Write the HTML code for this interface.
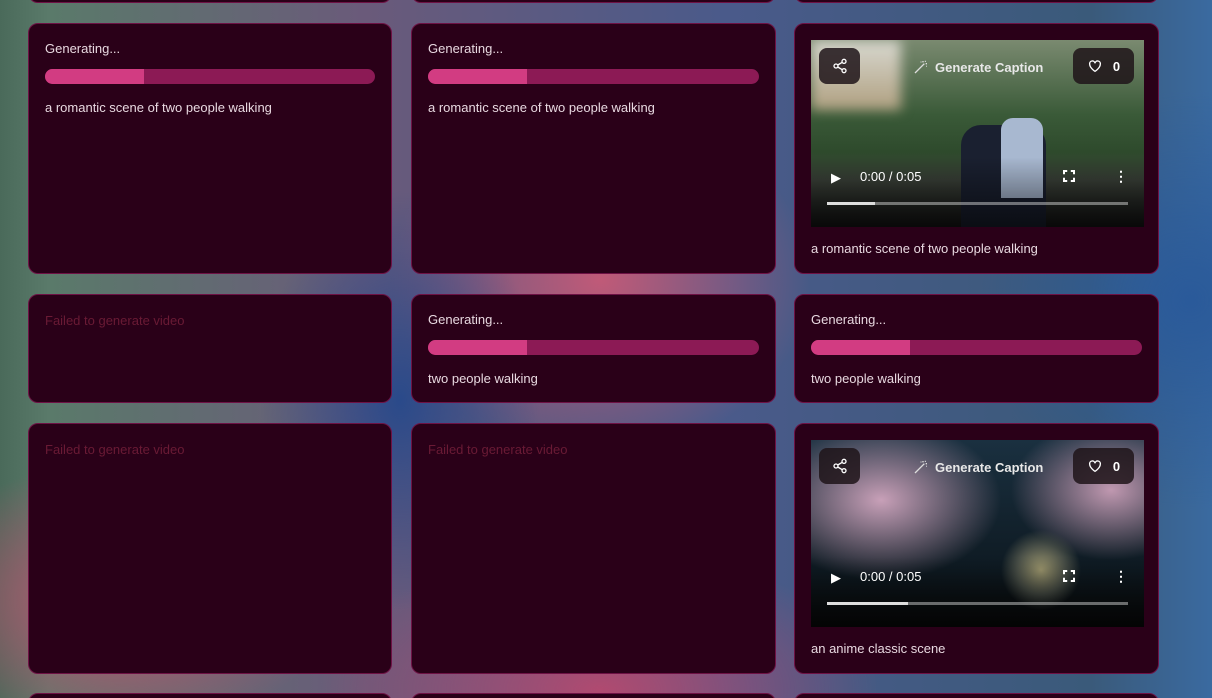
<!DOCTYPE html>
<html><head><meta charset="utf-8"><style>
*{box-sizing:border-box;margin:0;padding:0}
html,body{width:1212px;height:698px;overflow:hidden}
body{position:relative;font-family:"Liberation Sans",sans-serif;
background:
radial-gradient(ellipse 300px 200px at 120px 600px,#c05070 0%,transparent 70%),
radial-gradient(ellipse 400px 200px at 600px 690px,#b04a70 0%,transparent 70%),
radial-gradient(ellipse 300px 300px at 1190px 300px,#2a5a9a 0%,transparent 70%),
radial-gradient(ellipse 200px 300px at 400px 400px,#2a4a8a 0%,transparent 70%),
radial-gradient(ellipse 300px 250px at 600px 280px,#c05a78 0%,transparent 70%),
linear-gradient(90deg,#4a6a5a 0%,#5a7a6a 4%,#6a5a7a 30%,#4a5a8a 60%,#3a5a7a 90%,#3a6aa0 100%);}
.card{position:absolute;background:#2a0018;border:1px solid #6e1245;border-radius:10px;}
.gen{position:absolute;left:16px;top:17px;color:#e8d8e0;font-size:13px}
.bar{position:absolute;left:16px;top:45px;right:16px;height:15px;border-radius:8px;background:#8c1a55;overflow:hidden}
.bar i{display:block;width:30%;height:100%;background:#d23c82}
.cap{position:absolute;left:16px;color:#e8d8e0;font-size:13px}
.fail{position:absolute;left:16px;top:18px;color:#6a1a35;font-size:13px}
.vid{position:absolute;left:16px;top:16px;width:333px;height:187px;overflow:hidden}
.btn{position:absolute;top:8px;height:36px;background:rgba(30,20,25,.85);border-radius:8px;color:#fff;font-size:13px;font-weight:bold;display:flex;align-items:center;justify-content:center;gap:10px}
.ctrl{position:absolute;left:0;right:0;bottom:0;height:70px;background:linear-gradient(transparent,rgba(0,0,0,.6))}
.time{position:absolute;left:49px;top:129px;color:#fff;font-size:13px}
.prog{position:absolute;left:16px;right:16px;top:162px;height:3px;background:rgba(255,255,255,.4)}
.prog i{display:block;width:16%;height:100%;background:#ddd}
.gc{position:absolute;left:102px;top:19px;color:#e8e8e8;font-size:13px;font-weight:bold;display:flex;align-items:center;gap:6px}
svg{display:block}
</style></head><body>
<div class="card" style="left:28px;top:-20px;width:364px;height:23px"></div>
<div class="card" style="left:411px;top:-20px;width:365px;height:23px"></div>
<div class="card" style="left:794px;top:-20px;width:365px;height:23px"></div>

<div class="card" style="left:28px;top:23px;width:364px;height:251px"><div class="gen">Generating...</div><div class="bar"><i></i></div><div class="cap" style="top:76px">a romantic scene of two people walking</div></div>
<div class="card" style="left:411px;top:23px;width:365px;height:251px"><div class="gen">Generating...</div><div class="bar"><i></i></div><div class="cap" style="top:76px">a romantic scene of two people walking</div></div>
<div class="card" style="left:794px;top:23px;width:365px;height:251px">
 <div class="vid" style="background:linear-gradient(180deg,#7a8a70 0%,#3a5a38 40%,#2e4a2c 60%,#3a4038 75%,#151515 100%)">
  <div style="position:absolute;left:0;top:0;width:90px;height:70px;background:linear-gradient(#d8d8d0,#b0a080);filter:blur(6px)"></div>
  <div style="position:absolute;left:150px;top:85px;width:85px;height:102px;background:#1a2030;border-radius:20px 20px 0 0"></div>
  <div style="position:absolute;left:190px;top:78px;width:42px;height:80px;background:#a8b8d0;border-radius:12px 12px 0 0"></div>
  <div class="ctrl"></div>
  <div class="btn" style="left:8px;width:41px"><svg width="16" height="16" viewBox="0 0 24 24" fill="none" stroke="#fff" stroke-width="2"><circle cx="18" cy="5" r="3"/><circle cx="6" cy="12" r="3"/><circle cx="18" cy="19" r="3"/><path d="M8.6 13.5l6.8 4M15.4 6.5l-6.8 4"/></svg></div>
  <div class="gc"><svg width="16" height="16" viewBox="0 0 24 24" fill="none" stroke="#ddd" stroke-width="2"><path d="M3 21L17 7M15 3v2M19 7h2M19 3l-1 1M12 4v1M20 11h1"/></svg>Generate Caption</div>
  <div class="btn" style="left:262px;width:61px"><svg width="16" height="16" viewBox="0 0 24 24" fill="none" stroke="#fff" stroke-width="2"><path d="M12 20s-8-5-8-11a4 4 0 0 1 8-1 4 4 0 0 1 8 1c0 6-8 11-8 11z"/></svg>0</div>
  <div style="position:absolute;left:20px;top:130px;color:#fff;font-size:13px">▶</div>
  <div class="time">0:00 / 0:05</div>
  <div style="position:absolute;left:252px;top:130px;width:12px;height:12px;border:2px solid #fff;clip-path:polygon(0 0,35% 0,35% 35%,65% 35%,65% 0,100% 0,100% 35%,65% 35%,65% 65%,100% 65%,100% 100%,65% 100%,65% 65%,35% 65%,35% 100%,0 100%,0 65%,35% 65%,35% 35%,0 35%)"></div>
  <div style="position:absolute;left:303px;top:128px;color:#fff;font-size:14px;font-weight:bold">⋮</div>
  <div class="prog"><i></i></div>
 </div>
 <div class="cap" style="top:217px">a romantic scene of two people walking</div>
</div>

<div class="card" style="left:28px;top:294px;width:364px;height:109px"><div class="fail">Failed to generate video</div></div>
<div class="card" style="left:411px;top:294px;width:365px;height:109px"><div class="gen">Generating...</div><div class="bar"><i></i></div><div class="cap" style="top:76px">two people walking</div></div>
<div class="card" style="left:794px;top:294px;width:365px;height:109px"><div class="gen">Generating...</div><div class="bar"><i></i></div><div class="cap" style="top:76px">two people walking</div></div>

<div class="card" style="left:28px;top:423px;width:364px;height:251px"><div class="fail">Failed to generate video</div></div>
<div class="card" style="left:411px;top:423px;width:365px;height:251px"><div class="fail">Failed to generate video</div></div>
<div class="card" style="left:794px;top:423px;width:365px;height:251px">
 <div class="vid" style="background:radial-gradient(circle 40px at 230px 130px,#a09a70,#4a5048 60%,transparent 100%),radial-gradient(ellipse 120px 80px at 70px 60px,#c8a0b8,transparent),radial-gradient(ellipse 100px 70px at 300px 50px,#c098b0,transparent),linear-gradient(#1a3040,#0e1a22 70%,#0a0a0a)">
  <div class="ctrl"></div>
  <div class="btn" style="left:8px;width:41px"><svg width="16" height="16" viewBox="0 0 24 24" fill="none" stroke="#fff" stroke-width="2"><circle cx="18" cy="5" r="3"/><circle cx="6" cy="12" r="3"/><circle cx="18" cy="19" r="3"/><path d="M8.6 13.5l6.8 4M15.4 6.5l-6.8 4"/></svg></div>
  <div class="gc"><svg width="16" height="16" viewBox="0 0 24 24" fill="none" stroke="#ddd" stroke-width="2"><path d="M3 21L17 7M15 3v2M19 7h2M19 3l-1 1M12 4v1M20 11h1"/></svg>Generate Caption</div>
  <div class="btn" style="left:262px;width:61px"><svg width="16" height="16" viewBox="0 0 24 24" fill="none" stroke="#fff" stroke-width="2"><path d="M12 20s-8-5-8-11a4 4 0 0 1 8-1 4 4 0 0 1 8 1c0 6-8 11-8 11z"/></svg>0</div>
  <div style="position:absolute;left:20px;top:130px;color:#fff;font-size:13px">▶</div>
  <div class="time">0:00 / 0:05</div>
  <div style="position:absolute;left:252px;top:130px;width:12px;height:12px;border:2px solid #fff;clip-path:polygon(0 0,35% 0,35% 35%,65% 35%,65% 0,100% 0,100% 35%,65% 35%,65% 65%,100% 65%,100% 100%,65% 100%,65% 65%,35% 65%,35% 100%,0 100%,0 65%,35% 65%,35% 35%,0 35%)"></div>
  <div style="position:absolute;left:303px;top:128px;color:#fff;font-size:14px;font-weight:bold">⋮</div>
  <div class="prog"><i style="width:27%"></i></div>
 </div>
 <div class="cap" style="top:217px">an anime classic scene</div>
</div>

<div class="card" style="left:28px;top:693px;width:364px;height:20px"></div>
<div class="card" style="left:411px;top:693px;width:365px;height:20px"></div>
<div class="card" style="left:794px;top:693px;width:365px;height:20px"></div>
</body></html>
